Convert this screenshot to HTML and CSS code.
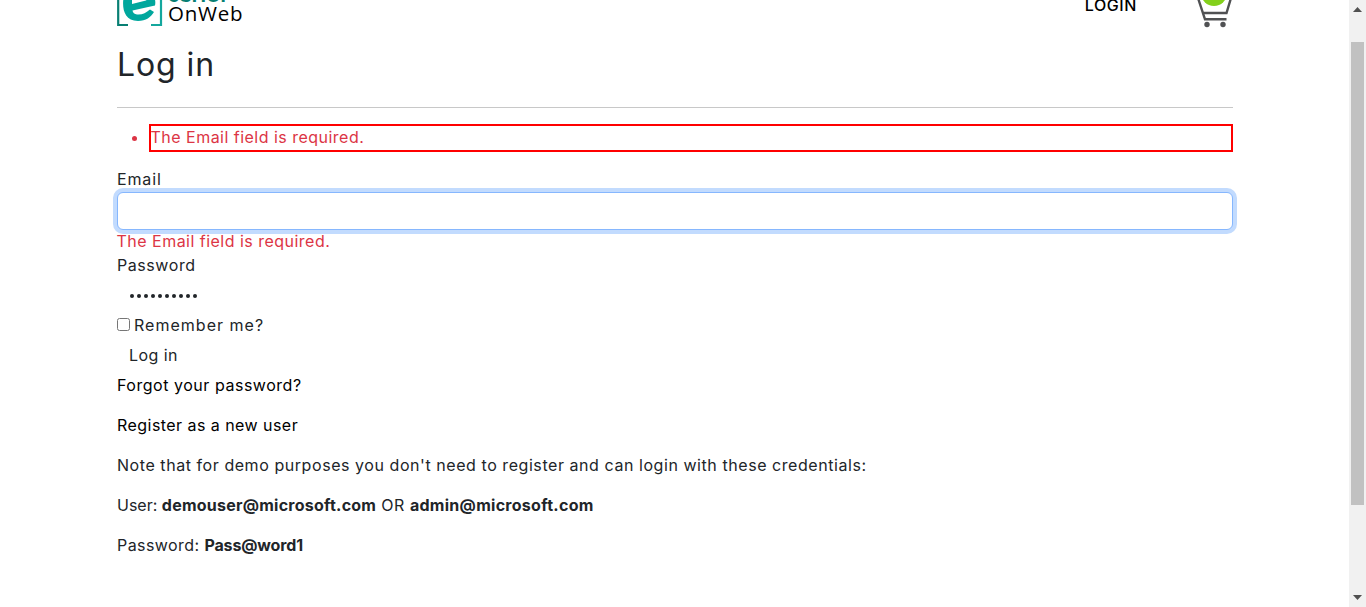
FILE: index.html
```html
<!DOCTYPE html>
<html lang="en">
<head>
<meta charset="utf-8">
<title>Log in</title>
<link rel="stylesheet" href="styles.css">
</head>
<body>
<div class="page">
  <div class="container">
    <header class="header">
      <div class="brand">
        <svg class="brand-mark" width="46" height="27" viewBox="0 0 46 27">
          <path d="M1.200 0V25H11" fill="none" stroke="#087f73" stroke-width="2.200"/>
          <path d="M44 0V25H34" fill="none" stroke="#14a79d" stroke-width="2.200"/>
          <path d="M6.500 -2C5 8 7 21 21 21C29 21 34 17 37 12L33 9.500C29 13 25 15 20 14.500Q16 14 15.500 10.500L38 5.500Q39 1 37 -3H29Q31 -1 29 0.500L15 4V-2Z" fill="#00a79d"/>
        </svg>
        <div class="brand-text"><span class="brand-top">eSHOP</span><span class="brand-bottom">OnWeb</span></div>
      </div>
      <div class="header-actions">
        <a class="login-link">LOGIN</a>
        <svg class="cart" width="36" height="29" viewBox="0 0 36 29">
          <g fill="none" stroke="#505153" stroke-width="2.400"><path d="M1 -2L8 19.300H29.500"/><path d="M6 13H29.500L34 -2"/></g>
          <circle cx="17" cy="-7" r="13" fill="#83d01b"/>
          <circle cx="10" cy="24.500" r="2.700" fill="#505153"/><circle cx="26" cy="24.500" r="2.700" fill="#505153"/>
        </svg>
      </div>
    </header>
    <h1 class="title">Log in</h1>
    <hr class="rule">
    <form class="form">
      <ul class="summary"><li><span class="t-error">The Email field is required.</span></li></ul>
      <label class="row"><span class="t-email">Email</span></label>
      <input class="email-input" type="text">
      <div class="row error"><span class="t-error">The Email field is required.</span></div>
      <label class="row"><span class="t-pass">Password</span></label>
      <div class="password"><i></i><i></i><i></i><i></i><i></i><i></i><i></i><i></i><i></i><i></i></div>
      <label class="remember"><input class="check" type="checkbox"><span class="t-remember">Remember me?</span></label>
      <div class="submit"><span class="t-submit">Log in</span></div>
      <p class="link"><span class="t-forgot">Forgot your password?</span></p>
      <p class="link"><span class="t-register">Register as a new user</span></p>
      <p><span class="t-note">Note that for demo purposes you don't need to register and can login with these credentials:</span></p>
      <p><span class="t-user">User: </span><b class="t-demo">demouser@microsoft.com</b><span class="t-or"> OR </span><b class="t-admin">admin@microsoft.com</b></p>
      <p><span class="t-pass2">Password: </span><b class="t-word">Pass@word1</b></p>
    </form>
  </div>
  <div class="scrollbar">
    <svg width="9" height="5" viewBox="0 0 9 5"><path d="M0 5L4.500 0L9 5Z" fill="#505050"/></svg>
    <div class="thumb"></div>
    <svg width="9" height="5" viewBox="0 0 9 5"><path d="M0 0L4.500 5L9 0Z" fill="#505050"/></svg>
  </div>
</div>
</body>
</html>
```
FILE: styles.css
```css
* { box-sizing: border-box; }
body { margin: 0; font: 16px/22px Inter, sans-serif; color: #212529; background: #fff; overflow: hidden; }
.page { display: flex; height: 607px; overflow: hidden; }
.container { width: 1116px; margin-left: 117px; }
.header { display: flex; justify-content: space-between; height: 40px; }
.brand { display: flex; gap: 5px; }
.brand-text { display: flex; flex-direction: column; color: #000; white-space: nowrap; margin-top: -13px; }
.brand-top { font: 700 19px/18px Inter, sans-serif; color: #087f73; }
.brand-bottom { font: 20.5px/16px "Open Sans", sans-serif; letter-spacing: 0.75px; }
.header-actions { display: flex; gap: 60px; }
.login-link { color: #000; font-weight: 450; margin-top: -6px; letter-spacing: 0.6px; }
.title { margin: 5px 0 0; font-size: 32px; line-height: 40px; font-weight: 400; letter-spacing: 0.9px; }
.rule { margin: 22px 0 0; border: 0; border-top: 1px solid #c8c8c8; }
.form { display: flex; flex-direction: column; }
.summary { margin: 16px 0; padding-left: 32px; color: #dc3545; }
.summary li { border: 2px solid #f00; height: 28px; }
.row { height: 24px; }
.error { color: #dc3545; }
.email-input { width: 100%; height: 38px; border: 1px solid #86b7fe; border-radius: 6px; outline: 0; box-shadow: 0 0 0 4px #c2dbfe; background: #fff; }
.password { display: flex; align-items: center; gap: 3px; height: 36px; padding-left: 13px; }
.password i { width: 4px; height: 4px; border-radius: 50%; background: #212529; }
.remember { display: flex; gap: 4px; height: 24px; }
.check { width: 13px; height: 13px; margin: 4px 0 0; }
.submit { height: 36px; padding: 6px 12px; }
p { margin: 0 0 18px; white-space: pre; }
.link { color: #000; }
b { font-weight: 700; }
.t-error { letter-spacing: 0.48px; margin-left: -0.5px; }
.t-email { letter-spacing: 0.85px; }
.t-pass { letter-spacing: 0.57px; }
.t-remember { letter-spacing: 1.02px; }
.t-submit { letter-spacing: 0.45px; }
.t-forgot { letter-spacing: 0.53px; }
.t-register { letter-spacing: 0.45px; }
.t-note { letter-spacing: 0.56px; }
.t-user { letter-spacing: 0; }
.t-demo { letter-spacing: 0.24px; }
.t-or { letter-spacing: 0.55px; }
.t-admin { letter-spacing: 0.28px; }
.t-pass2 { letter-spacing: 0.43px; }
.t-word { letter-spacing: -0.15px; }
.scrollbar { display: flex; flex-direction: column; align-items: center; width: 17px; margin-left: auto; background: #f1f1f1; padding: 7px 0; height: 607px; }
.thumb { width: 13px; height: 463px; background: #c1c1c1; margin: 30px 0 auto; }
```
